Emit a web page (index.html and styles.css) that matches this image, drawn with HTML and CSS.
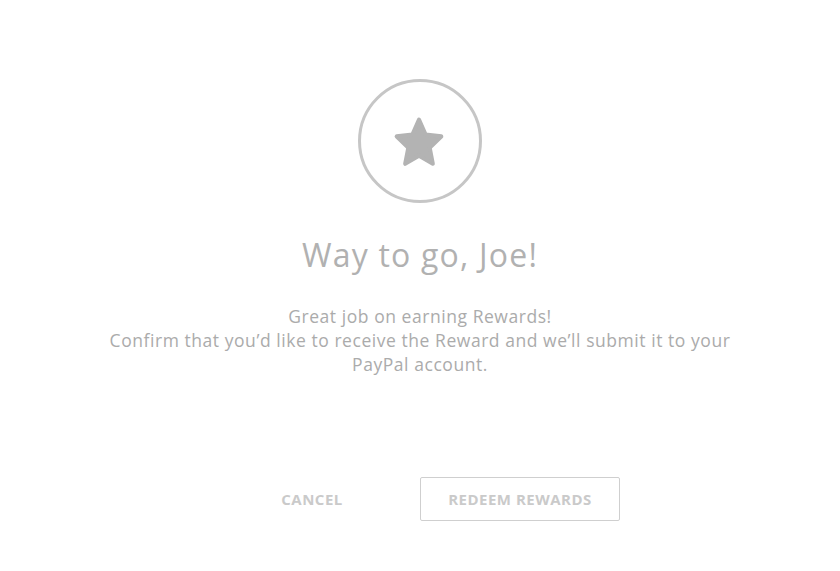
FILE: index.html
```html
<!DOCTYPE html>
<html lang="en">
<head>
<meta charset="utf-8">
<title>Way to go, Joe!</title>
<link rel="stylesheet" href="styles.css">
</head>
<body>
<main class="modal">
  <div class="badge">
    <svg width="126" height="126" viewBox="0 0 126 126" aria-hidden="true">
      <circle cx="63" cy="63" r="60.5" fill="none" stroke="#c6c6c6" stroke-width="3"/>
      <g transform="translate(62 66) scale(1.02 1.06)">
        <polygon points="0,-23 6.47,-8.9 21.87,-7.11 10.46,3.4 13.52,18.61 0,11 -13.52,18.61 -10.46,3.4 -21.87,-7.11 -6.47,-8.9" fill="#b3b3b3" stroke="#b3b3b3" stroke-width="4" stroke-linejoin="round"/>
      </g>
    </svg>
  </div>
  <h1 class="title">Way to go, Joe!</h1>
  <p class="message">Great job on earning Rewards!<br>Confirm that you’d like to receive the Reward and we’ll submit it to your PayPal account.</p>
  <div class="actions">
    <button class="btn btn-plain" type="button">CANCEL</button>
    <button class="btn btn-outline" type="button">REDEEM REWARDS</button>
  </div>
</main>
</body>
</html>
```
FILE: styles.css
```css
html, body {
  margin: 0;
  padding: 0;
  background: #ffffff;
}
body {
  font-family: "Open Sans", Lato, "Liberation Sans", sans-serif;
  color: #ababab;
}
.modal {
  display: flex;
  flex-direction: column;
  align-items: center;
  padding-top: 78px;
}
.badge {
  width: 126px;
  height: 126px;
  display: flex;
}
.title {
  margin: 29px 0 0;
  font-size: 32px;
  line-height: 44px;
  font-weight: 400;
  letter-spacing: 1.2px;
  color: #b1b1b1;
}
.message {
  margin: 27px 0 0;
  width: 640px;
  text-align: center;
  font-size: 17.5px;
  line-height: 24px;
  letter-spacing: 0.55px;
  color: #ababab;
}
.actions {
  display: flex;
  gap: 8px;
  margin-top: 101px;
  margin-left: -8px;
}
.btn {
  width: 200px;
  height: 44px;
  font-family: inherit;
  font-size: 15px;
  font-weight: 700;
  letter-spacing: 0.5px;
  color: #cacaca;
  background: #ffffff;
  border-radius: 2px;
  cursor: pointer;
}
.btn-plain {
  border: 1px solid transparent;
}
.btn-outline {
  border: 1px solid #cfcfcf;
}
```
